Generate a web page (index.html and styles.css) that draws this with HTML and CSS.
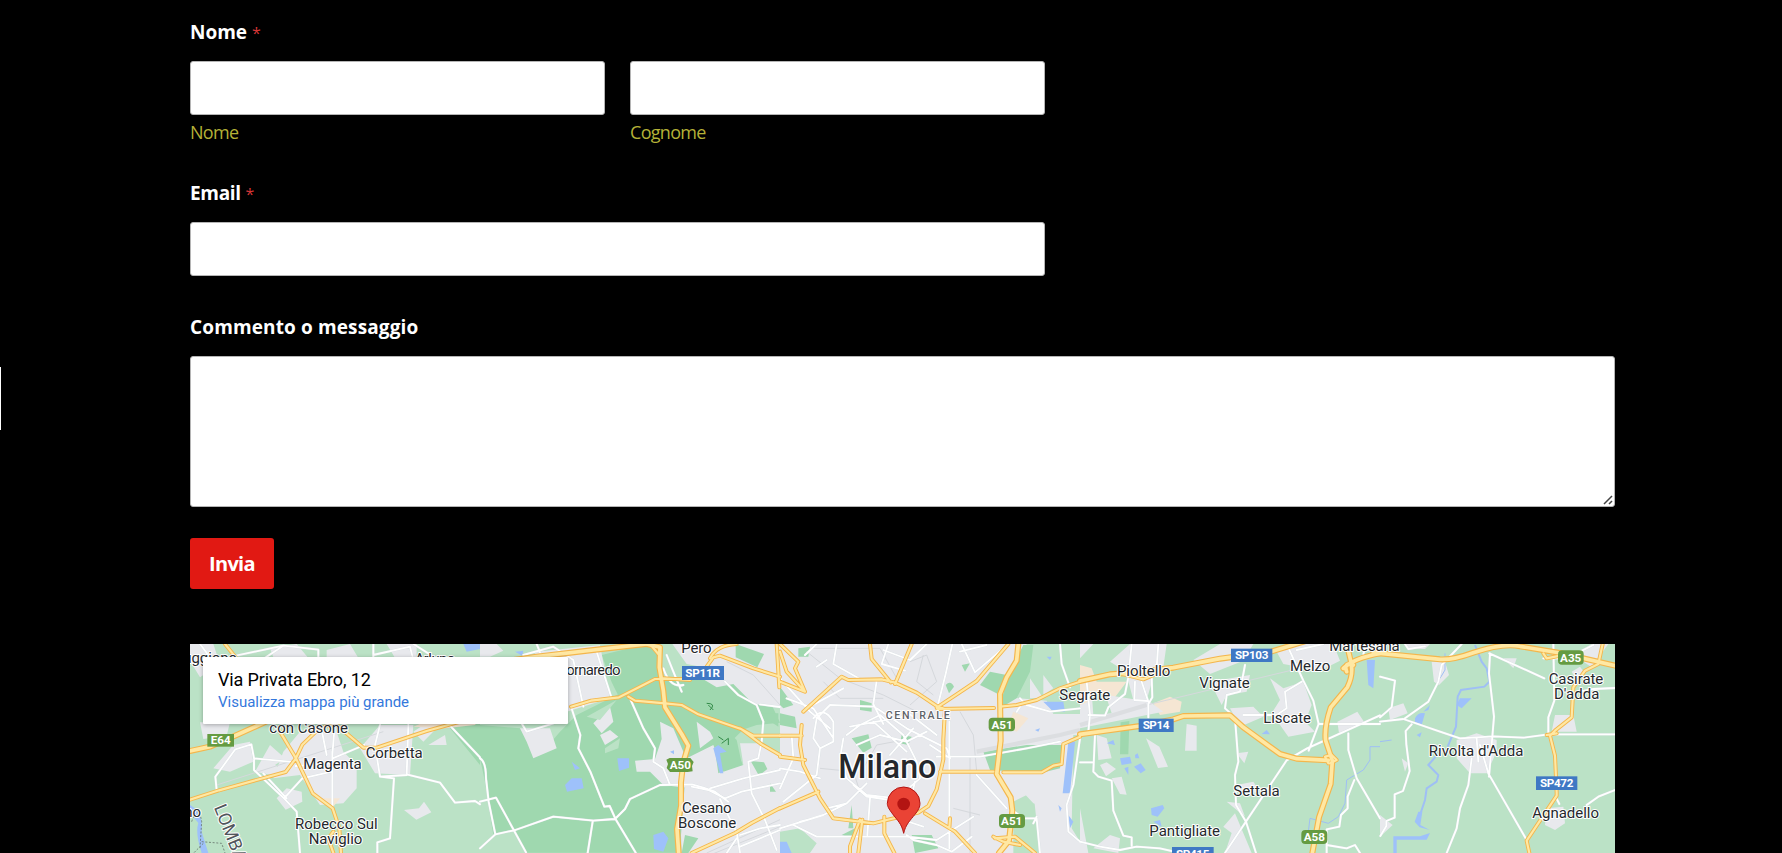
FILE: index.html
```html
<!DOCTYPE html>
<html lang="it">
<head>
<meta charset="utf-8">
<title>Contatti</title>
<link rel="stylesheet" href="styles.css">
</head>
<body>
<div class="side-tab"></div>
<main class="page">
  <form class="form">
    <div class="field field-name">
      <label class="label" for="nome">Nome <span class="req">*</span></label>
      <div class="name-row">
        <div><input class="input" id="nome" type="text"><span class="sub">Nome</span></div>
        <div><input class="input" type="text"><span class="sub">Cognome</span></div>
      </div>
    </div>
    <div class="field field-email">
      <label class="label label-email" for="email">Email <span class="req">*</span></label>
      <input class="input" id="email" type="email">
    </div>
    <div class="field field-message">
      <label class="label label-message" for="msg">Commento o messaggio</label>
      <div class="area-wrap">
        <textarea class="input area" id="msg"></textarea>
        <svg class="grip" viewBox="0 0 10 10"><path d="M1 9L9 1M6 9L9 6"/></svg>
      </div>
    </div>
    <button class="submit" type="button">Invia</button>
  </form>
  <section class="map">
    <svg class="map-svg" viewBox="570 1932 4275 627" preserveAspectRatio="none">
      <defs>
        <g id="minor">
          <g transform="translate(540 1905)">
            <path d="M60 27l30 40M130 70L310 32l105 12v30M310 32l-60 40M580 27v40M580 60l110-25 8 32M700 27l80 50"/>
            <path d="M110 465l-4-40 60-82 48-15 8 42 128 12M222 375v30l90 85 55-60 88-20M312 490l38 40 10 124M320 490l-70-75M457 350v165M420 260l20 100M465 260l-8 100M457 385l-110 8M600 270l-15 60 15 95 80-5 5-150M600 425l42 5-6 90-6 90-38 12v32M680 418l100 25 45 60 60-5 15 10M810 272l90 95M458 370l95-40"/>
          </g>
          <g transform="translate(1440 1905)">
            <path d="M130 60l90-25 60 40 30 140M350 50l45 140M170 27l10 25M110 240l30 50 80-25M273 215l18 55 10 30-6 40 36 70 42 105 16-2 18 40 60 100M450 190l40 90 35 60-5 40 30 20 20 50M0 370q18 10 18 60l8 70 20 98M0 500l48-12 90 164M0 640l46-42 60-13 114-40 120 12 65-5 30-30 15-30 90-42 96-2 34 10 35 12 40 30M338 560l-15 94M550 100q20 60 60 50M560 60l20 50 25 60"/>
            <path d="M735 140l40 40 55 30 20 50-5 60-10 50-30 10 10 95 40 80 35 90M690 460l100-30 110-25M735 490l50-20 115-25M735 490l-50-25-50-10M720 492l50 100 10 60M840 208l60 8M780 600l60-20 60-10M770 610l-30 44M780 635l120-50"/>
          </g>
          <g transform="translate(2340 1905)">
            <path d="M0 130l90 100 60 50M20 190l80 30 60 90M80 220l110-60M100 250q30-40 60 10v60l-40 20-20-30 10-60 40-40 130 5M120 340l-10 80-100 80M35 300l5 70-40 90M0 400l60 10 60 20M75 60l35-33M110 95l30-20M170 27l-10 60 80 45 50 5-10 70 30 60M325 27l-20 60 70 20M310 45l80 30 50-48M517 27l-20 90-25 100M545 27l40 85M585 112l100-85M540 50l80-20M840 27l5 60 25 70"/>
            <path d="M200 300l40-30 60-30 70 60 40 80 10 50-70 60-90-10-60-50-20-60 10-60M290 220l90 60 120 60 10 30M380 230l90 70M210 275l160-30M280 260l100 90M230 330l70-30 80 20 60-30M400 280l-70 80M470 365h130l140-25 100-20M508 260v380M510 370l-60-40M220 450l40 35 70 10 40 60 60 20M270 490l-8 110M140 520l60-15 60-60M0 580l130-40 70-35M40 570l70 35h270l90 10 110-70M60 560l40-10M380 600l20 15 70 15 45 20 60-45M405 440l-10 40M590 420l90 100M690 520l40 30h40l10 104M770 545l-10 20M720 190l20 20 70 20 90-10M720 215l-10 15M900 310l-20 140-20 60 5 80 35 30"/>
          </g>
          <g transform="translate(3240 1905)">
            <path d="M20 140l10 100-5 50M155 27l-10 100-10 50-50 40-10 25-50-2M165 140l-2 55 40 3M235 27l-5 70-15 30 2 60-12 20v40M185 140l20 60M45 300l-5 110 15 15 40 12 5 90 30 75 25 5v25M0 382h40M0 620l60 15 60 10 50-10 70 5 60 14M495 90l-15 80-40 10-5 40 35 30"/>
            <path d="M465 250l10 130-10 40 3 90 30 50 30 94M435 654l60-90 60-90 65-98 60-35 220-100M620 27l50 110 30 60 16 70-30 80M650 45l80-18M665 140l-50 30 5 50-30 20h-100M715 267h185M805 295v50l25 85 70 120M823 435l-20 50v35l-20 20-5 35-38 8v70M740 630l60 10 25-10 15 24M860 27l-10 30"/>
          </g>
          <g transform="translate(4140 1905)">
            <path d="M0 125l45 12-10 80-35 30M0 260l70-8 110 38 60 20 100-6 90 4 75-10h200M75 250l70-50 30-60 10-50 60-63M95 268l-18 20 2 40 10 80-20 60-25 10v70l-25 10v15l-18 30M328 55l165 75M330 55l-3 60 15 130-15 180M520 27l3 170-18 50v50M300 330l25 85 115 200M275 370l-10 80-25 70-10 60-30 74M290 310l5 70M75 27l10 15 50-8M600 170l40-8 65-3M528 487l10 20M620 510l35-25 50-20M600 50l40-20M490 70h60"/>
          </g>
        </g>
        <g id="major">
          <g transform="translate(540 1905)">
            <path d="M135 27l40 50"/><path class="wide" d="M30 348l60-13 80-35 110-50"/>
            <path d="M30 494l87-28 200-55 30-40 20-42 50-48 60-20M300 290l48 80 50 105 60 45 20 60 5 74M460 590l-15 20 15 44M470 270l80 68h40l150-50 160-45"/>
          </g>
          <g transform="translate(1440 1905)">
            <path class="wide" d="M0 90l170-25 170-20 160-18"/><path class="wide" d="M500 27l40 10-2 60 12 70 5 50 50 80 20 35-15 50-7 60v70l-12 70 5 72"/>
            <path d="M510 27l25 30M640 27M273 215l60-18 84-10 30-15 78-40h80M445 185l20 12 90 8 50 5 50 28 130 45 60 45 55 32M550 130l80 5M780 280l40 22h80M680 95l20-28 20-5 100 38 80 25M690 70q20-40 80-43M890 27l8 130M635 654l130-60 50-30 85-45"/>
          </g>
          <g transform="translate(2340 1905)">
            <path d="M0 50l20 60 55 60-30-70 10-20-55-53M0 140l75 30M70 230l115-105 20 10 100-2 40 10 65 30 60 40 25 10-5 90v60l-20 90-25 50-30 20-95 22-40 10-120-15-40-60-50-100-10-60 5-60M0 302h65M0 365l75 10M0 520l115-50M270 27l5 45 57 70M395 27l-50 120M470 218l60-40 60-40 95-111M472 222l170-3M480 410h160M435 535l90 55 60 64M510 550l-2 30M210 654v-20l30-80M235 654l12-100M313 545v50l30 59"/>
            <path class="wide" d="M715 27l-5 50-30 50-20 50 2 140-12 100 42 70 5 40-10 90-30 37"/>
            <path d="M660 215l50-5 60-15 70-35 60-20M670 412h115l35-20 25-5 5-60 50-22M645 610l60-5 60 49M640 605l30 15 50 10"/>
          </g>
          <g transform="translate(3240 1905)">
            <path class="wide" d="M0 138l90-20 60-5 130-15 140-27 150-20 130-40"/><path class="wide" d="M0 298l180-25 100-20 30-10 140-2 40 36 110 80 50 14 95 5"/><path d="M120 115l70 18 90-37M745 385l-10-20 20-5 15 15-20 10"/>
            <path class="wide" d="M800 27l12 50q10 40-10 80l-50 60q-20 60-15 100l20 60-5 70-35 100-20 107M790 100q30-30 110-45M800 110q-10-30 20-20"/>
          </g>
          <g transform="translate(4140 1905)">
            <path class="wide" d="M-20 53l200 20q40 2 100-20 90-30 140-19l120 20 165 38"/>
            <path d="M668 27l-13 60-40 20-35 50-5 90-50 40-15 15 15 60 5 110v10l-90 135 8 37M490 55l10 15 40-8M500 300l30-5"/>
          </g>
        </g>
      </defs>
      <rect class="base" x="570" y="1932" width="4275" height="627"/>
      <g transform="translate(540 1905)">
        <path class="forest" d="M840 240h60v150l-90-110zM890 200h10v60h-10z"/>
        <path class="urban" d="M30 27h70l20 60-60 40-30-50zM270 40l80-13 50 60-110 5zM440 45l70-18 30 50h-100zM620 27h90v50h-60zM60 262h90l-10 40-70 10zM100 400l60-70 50-10 10 60-70 30-40-8zM225 410l45-80 45 40-30 20 30 20-40 10zM290 490l30-30 45 10 2 30-50 24zM310 350l50-60 110 0 20 60 40 40v70l-40 45-70 5-60-90-80 10zM540 340l60-70h100l-10 150-105-5zM700 290l30-20 40 10-40 40zM745 330l50-30 5 30zM672 525l45-5 15-20 22 32-45 22z"/>
        <path class="sand" d="M700 275l60-25h140l-15 20-90 10zM430 490l50 0-20 25z"/>
        <path class="water" d="M30 510q40 20 35 80l20 64H65q-20-60-10-90l-25-30zM850 27h50v15l-40 8z"/>
        <path class="rail" d="M110 450l500-160"/>
        <path class="border" d="M35 560q20-60 30 0l-5 80M65 620l60 5 10 29M70 625l-30 30"/>
      </g>
      <g transform="translate(1440 1905)">
        <path class="forest" d="M0 270l120 10 60 80 60-70 50-50 80-40 60-30 130-40 150 3 120-20 70 150-100 10-80 80-30 60-10 240H140L100 590l-60 10L15 440 0 370zM365 60l135-33h30l20 120 50 20-180 25-25-50zM620 160l100-10 90 60 20 60-60 20-120-60zM710 330l50-10 30 75-70 20z"/>
        <path class="urban" d="M0 27h50l20 20-40 18H0zM170 50l190-20 30 160-130 40V70H150zM120 280l90 0 20 60-70 30-20-50zM340 265l50-50 10 45-35 35zM360 300l30-15 25 20-40 25zM540 260l40 20 30 70 20 110-80-10-40-40h-40l-5-33 60-5 20-60zM550 27h350v190l-80-10-60-60-50 10-50-30 10-30-50-10-50-70zM650 260l40 30 10 20-40 30zM620 370l80-40 30 80 60-20-10-65 50 0 70 30v315H605l-2-70z"/>
        <path class="forest" d="M767 27l85 30-20 40-65-30zM730 275l40 40 15 70-70 30-10-70zM812 378l40 4 10 20-25 20zM835 235h60v40zM870 445l18 25-18 0zM615 600l40 10-30 44h-20z"/>
        <path class="park" d="M0 654v-40l45-18 60-10 35 68zM320 245l90-50-50 60zM375 340l45-30-5 30-40 15z"/>
        <path class="water" d="M255 450l20-20 30 0 6 30-50 10zM275 380l25 20-15 5zM412 370l35 0v28l-30 10zM520 600l30-10 15 20-15 40-28-8zM570 350l12-4v12zM700 340l15-10 25 20-20 5 10 60-10 0zM105 50l25-3-3 15z"/>
        <path class="trail" d="M680 205q30 0 10 20M685 210l15 15M715 305l15 10M725 325l20-15v20"/>
        <path class="rail" d="M740 80l80 40 80 90M680 654l220-100M690 660l210-85"/>
      </g>
      <g transform="translate(2340 1905)">
        <path class="urban" d="M0 27h900v627H0z"/>
        <path class="park" d="M740 27h160v210l-80 0-20-40-110-10 20-60zM880 300h20v320l-25-40zM700 500l60-30 20 184h-80zM0 590l60-10 50 45-20 29H0z"/>
        <path class="forest" d="M610 350l130-20 110 0-10 70-60 15-150-10zM55 40l35-5-5 30-30 0zM0 155l40 55-30 10-10-10zM0 235l45 10 5 35-50-10zM240 195l35 10v25l-35-5zM497 150q15-15 25 5l-15 20zM545 90l25-5-15 25zM600 150l30-40 50 10-20 60zM215 310l50-12 10 40-25 15zM365 300l30 5-10 25-25-5zM730 30l30 0-10 80-40 80-50 30 20-90zM395 600l60 0 20 40-70 14zM215 510l5 70-15 0zM185 600l40-20-10 30z"/>
        <path class="urban" d="M750 130l40 60-40 0zM790 120l30 40-30 20zM690 430l140-15 20 60-30 50-60-20z"/>
        <path class="sand" d="M700 230l45 20-35 40-30-10z"/>
        <path class="water" d="M790 200l60 0 5 30-40-5zM865 320l20 0-15 155-22 0zM835 510l10 10-5 10zM865 540l15 20-10 20zM0 620l20 0 15 34H0zM765 285l15-5-5 10zM800 65l15 0-5 10z"/>
        <path class="rail" d="M80 50l100 80 130 50 100 50M390 80l50-20 30 80-80 70M430 60l-20 80 50 40M130 140l50 50h130M540 230l40 70 10 110M480 365h90v180M570 530v124M600 540l-80-20M120 400l100 10 20 60M100 40h200l50 90M250 400l40-70 80-15"/>
        <path class="track" d="M590 350l250-50 60-15"/>
      </g>
      <g transform="translate(3240 1905)">
        <path class="sand" d="M0 90l35 10 15 40 90 0-60 80-80 40zM220 205l50-20 35 15-5 30-60 10z"/>
        <path class="urban" d="M0 27h40L0 70zM90 80l60-53h110l-10 70-100 20zM340 75l80-48h100l-30 50-100 40zM590 50l60-23h110l20 50-60 30-110-20zM0 210l80-30 130 20 40 30-250 50zM140 120l80 5-20 70-40 0zM390 140l120-20-10 50-60 10-15 30zM450 220l70-5 30 30-70 30zM570 130l40 30 60-20 25 70-20 50 30 30-80 15-50-70 25-40zM772 260l60-30 20 30-75 35zM50 300l30 10 15 60-40 5zM60 390l20-8 28 20-30 22zM95 430l30-5 15 54-20-2zM198 310l40 25 26 60-30 4zM320 267l30 5v75l-35 0zM430 575l35-40 50 119h-80l20-60zM440 500l40 5 15 40zM470 355l35-5-12 35zM470 450l50-10 20 30-60 10zM0 520l25 134H0zM40 640l50-40 30 10-5 44z"/>
        <path class="park" d="M35 170l40 5 20 60-55 5zM435 105l40-10-5 15z"/>
        <path class="forest" d="M122 262l26-4-3 100h-25z"/>
        <path class="water" d="M120 370l30-5 5 20-30 5zM165 360l8-5 5 15h-12zM162 395l20-10 15 20-15 10zM133 400l12-5v25zM213 520l35-10 5 10-20 25-18-5zM220 560l20-5 5 20zM545 297l15-12 10 13zM80 325l20-10 5 15zM860 75h25l-5 85-15-10z"/>
        <path class="stream" d="M900 335h-30v40l-20 30-50 30-5 70-20 40-30 20-55-15-5 40"/>
        <path class="track" d="M0 270l200-60"/><path class="rail" d="M200 210l500-120"/>
      </g>
      <g transform="translate(4140 1905)">
        <path class="urban" d="M155 80l40 0 12 40-30 30-15-10zM25 220l45-15 13 30-53 20zM370 70l40 0-10 30zM580 60l55-33h50l-50 70zM230 315l60-20 60 20 0 35-30 65h-50l-40-45zM525 240h55l10 50h-75zM500 520l50-5 5 50-30 20-30-15zM575 110l25-15 15 20-20 30zM65 370l20 15-10 25zM0 540l38 30-38 35zM75 27h75l-15 15-50 0z"/>
        <path class="water" d="M105 250q10-20 30-15l-10 35-20-5zM130 230l20-20-5 15zM230 210l10-20 35 0-30 30zM110 300l15-8-5 15z"/>
        <path class="river" d="M285 30l20 50 15 20 8 40-15 15-70 10-10 20-5 90-25 60M180 350l-35 40 30 30-5 20-30 20-5 35-20 60"/>
        <path class="stream" d="M195 55v50l-15 25M0 320l35-5"/>
        <path class="water" d="M115 530l12 0-6 40 28 15-30-8-15-17zM40 654v-50l80 0 30-10-10 20-90 0v40z"/>
      </g>
      <use href="#minor" class="minor-edge"/><use href="#minor" class="minor"/>
      <use href="#major" class="casing"/><use href="#major" class="core"/>

      <g class="town" transform="translate(540 1905)">
        <text x="-19" y="83" textLength="190">Cuggiono</text><text x="704" y="87" textLength="122">Arluno</text>
        <text x="268" y="294" textLength="236">con Casone</text><text x="557" y="370" textLength="171">Corbetta</text>
        <text x="370" y="401" textLength="175">Magenta</text><text x="345" y="583" textLength="248">Robecco Sul</text><text x="386" y="628" textLength="161">Naviglio</text>
        <text x="13" y="545">no</text><text class="region" transform="translate(101 517) rotate(68)">LOMBARDIA</text>
      </g>
      <g class="town" transform="translate(1440 1905)">
        <text x="232" y="120" textLength="190">Cornaredo</text><text x="604" y="53" textLength="91">Pero</text>
        <text x="606" y="533" textLength="149">Cesano</text><text x="594" y="578" textLength="175">Boscone</text>
      </g>
      <g class="town" transform="translate(2340 1905)">
        <text x="838" y="195" textLength="153">Segrate</text>
        <text class="district" x="317" y="251" textLength="192">CENTRALE</text>
        <text class="city" x="175" y="429" textLength="294" lengthAdjust="spacingAndGlyphs">Milano</text>
        <path class="pin" d="M371 595C365 565 351 555 338 537C326 521 322 514 322 505a49 49 0 0 1 98 0C420 516 415 526 405 538C390 557 377 568 371 595z"/>
        <circle class="pin-dot" cx="371" cy="507" r="19"/>
      </g>
      <g class="town" transform="translate(3240 1905)">
        <text x="111" y="122" textLength="160">Pioltello</text><text x="358" y="160" textLength="151">Vignate</text>
        <text x="630" y="107" textLength="121">Melzo</text><text x="748" y="47" textLength="211">Martesana</text>
        <text x="550" y="264" textLength="143">Liscate</text><text x="460" y="484" textLength="139">Settala</text><text x="208" y="604" textLength="212">Pantigliate</text>
      </g>
      <g class="town" transform="translate(4140 1905)">
        <text x="506" y="148" textLength="164">Casirate</text><text x="522" y="193" textLength="136">D'adda</text>
        <text x="146" y="362" textLength="284">Rivolta d'Adda</text><text x="457" y="549" textLength="200">Agnadello</text>
      </g>
      <g class="shield">
        <rect class="green-s" x="622" y="2202" width="80" height="38"/><text x="662" y="2233">E64</text>
        <path class="green-s" d="M2009 2274h62l10 12-5 12 2 16-15 2h-53l-10-12 4-12-5-13z"/><text x="2041" y="2307">A50</text>
        <rect class="green-s" x="2966" y="2153" width="79" height="41" rx="12"/><text x="3006" y="2187">A51</text>
        <rect class="green-s" x="2997" y="2442" width="78" height="42" rx="12"/><text x="3035" y="2475">A51</text>
        <rect class="green-s" x="3904" y="2490" width="78" height="42" rx="12"/><text x="3943" y="2524">A58</text>
        <rect class="green-s" x="4674" y="1951" width="77" height="43" rx="12"/><text x="4712" y="1985">A35</text>
        <rect class="blue-s" x="2046" y="1998" width="126" height="42"/><text x="2108" y="2031" textLength="104">SP11R</text>
        <rect class="blue-s" x="3693" y="1946" width="124" height="40"/><text x="3755" y="1978" textLength="100">SP103</text>
        <rect class="blue-s" x="3416" y="2156" width="105" height="40"/><text x="3468" y="2188" textLength="80">SP14</text>
        <rect class="blue-s" x="4608" y="2329" width="124" height="41"/><text x="4670" y="2361" textLength="100">SP472</text>
        <rect class="blue-s" x="3516" y="2541" width="125" height="41"/><text x="3578" y="2574" textLength="100">SP415</text>
      </g>
    </svg>
    <div class="card">
      <div class="card-title">Via Privata Ebro, 12</div>
      <a class="card-link">Visualizza mappa più grande</a>
    </div>
  </section>
</main>
</body>
</html>
```
FILE: styles.css
```css
* { box-sizing: border-box; }
body { margin: 0; height: 853px; overflow: hidden; background: #000; color: #fff; font-family: "Open Sans", "Noto Sans", sans-serif; }
.side-tab { position: absolute; left: 0; top: 367px; width: 1px; height: 63px; background: #fff; }
.page { width: 1425px; margin-left: 190px; padding-top: 19px; }
.form { display: flex; flex-direction: column; align-items: flex-start; height: 625px; }
.field { width: 855px; display: flex; flex-direction: column; }
.field-name { height: 161px; }
.field-email { height: 134px; }
.field-message { width: 100%; height: 224px; }
.label { height: 42px; line-height: 26px; font-size: 19px; font-weight: 700; letter-spacing: 0; white-space: nowrap; }
.label-email { letter-spacing: -0.3px; }
.label-message { letter-spacing: 0.13px; }
.req { color: #d63637; font-size: 16px; font-weight: 400; }
.name-row { display: grid; grid-template-columns: 1fr 1fr; gap: 25px; }
.input { display: block; width: 100%; height: 54px; margin: 0; padding: 0 12px; background: #fff; border: 1px solid #b5b5b5; border-radius: 3px; outline: 0; font: inherit; }
.sub { display: block; margin-top: 4px; line-height: 26px; font-size: 18px; letter-spacing: -0.7px; color: #b5b137; }
.area-wrap { position: relative; height: 151px; }
.area { height: 151px; resize: none; }
.grip { position: absolute; right: 2px; bottom: 2px; width: 10px; height: 10px; fill: none; stroke: #444; stroke-width: 1.5; }
.submit { width: 84px; height: 51px; padding: 0; border: 0; border-radius: 3px; background: #e11913; color: #fff; font: 700 20px "Open Sans", "Noto Sans", sans-serif; letter-spacing: -0.7px; }
.map { position: relative; height: 209px; overflow: hidden; font-family: Roboto, sans-serif; }
.map-svg { display: block; width: 1425px; height: 209px; }
.card { position: absolute; left: 13px; top: 13px; width: 365px; height: 67px; padding: 11px 15px; background: #fff; box-shadow: 0 1px 4px rgba(0,0,0,.3); color: #000; border-radius: 1px; }
.card-title { font-size: 18px; line-height: 24px; letter-spacing: -0.13px; }
.card-link { display: block; font-size: 15px; line-height: 20px; color: #3478dc; letter-spacing: -0.02px; }
.base, .park { fill: #bbe2c6; }
.forest { fill: #9fd8af; }
.urban { fill: #e8e9ed; }
.sand { fill: #f5e6d3; }
.water { fill: #9ec1fa; }
.rail, .track, .river, .stream, .trail, .border { fill: none; }
.rail { stroke: #d5d8dc; stroke-width: 3; }
.track { stroke: #dcdee1; stroke-width: 13; }
.river { stroke: #9fbff5; stroke-width: 6; }
.stream { stroke: #9fbff5; stroke-width: 3; }
.trail { stroke: #338b48; stroke-width: 3; }
.border { stroke: #68766f; stroke-width: 2.5; stroke-dasharray: 6 5; }
.minor, .minor-edge, .casing, .core { fill: none; stroke-linejoin: round; stroke-linecap: round; }
.minor-edge { stroke: #d5dde0; stroke-width: 7; }
.minor { stroke: #fff; stroke-width: 5.5; }
.casing { --w: 18; stroke: #f4b64c; stroke-width: 12; }
.core { --w: 11; stroke: #ffe8a3; stroke-width: 6.5; }
.wide { stroke-width: calc(var(--w) * 1px); }
.town text { font-size: 45px; fill: #25282c; stroke: #fff; stroke-width: 6px; stroke-linejoin: round; paint-order: stroke; }
.town .district { font-size: 32px; font-weight: 500; fill: #5f6368; }
.town .city { font-size: 99px; font-weight: 500; stroke-width: 9px; }
.town .region { font-size: 54px; fill: #50565b; }
.pin { fill: #ea4335; stroke: #b31412; stroke-width: 3; }
.pin-dot { fill: #b31412; }
.shield text { fill: #fff; font-size: 35px; font-weight: 700; text-anchor: middle; }
.green-s { fill: #659b42; }
.blue-s { fill: #3f78c4; }
```
